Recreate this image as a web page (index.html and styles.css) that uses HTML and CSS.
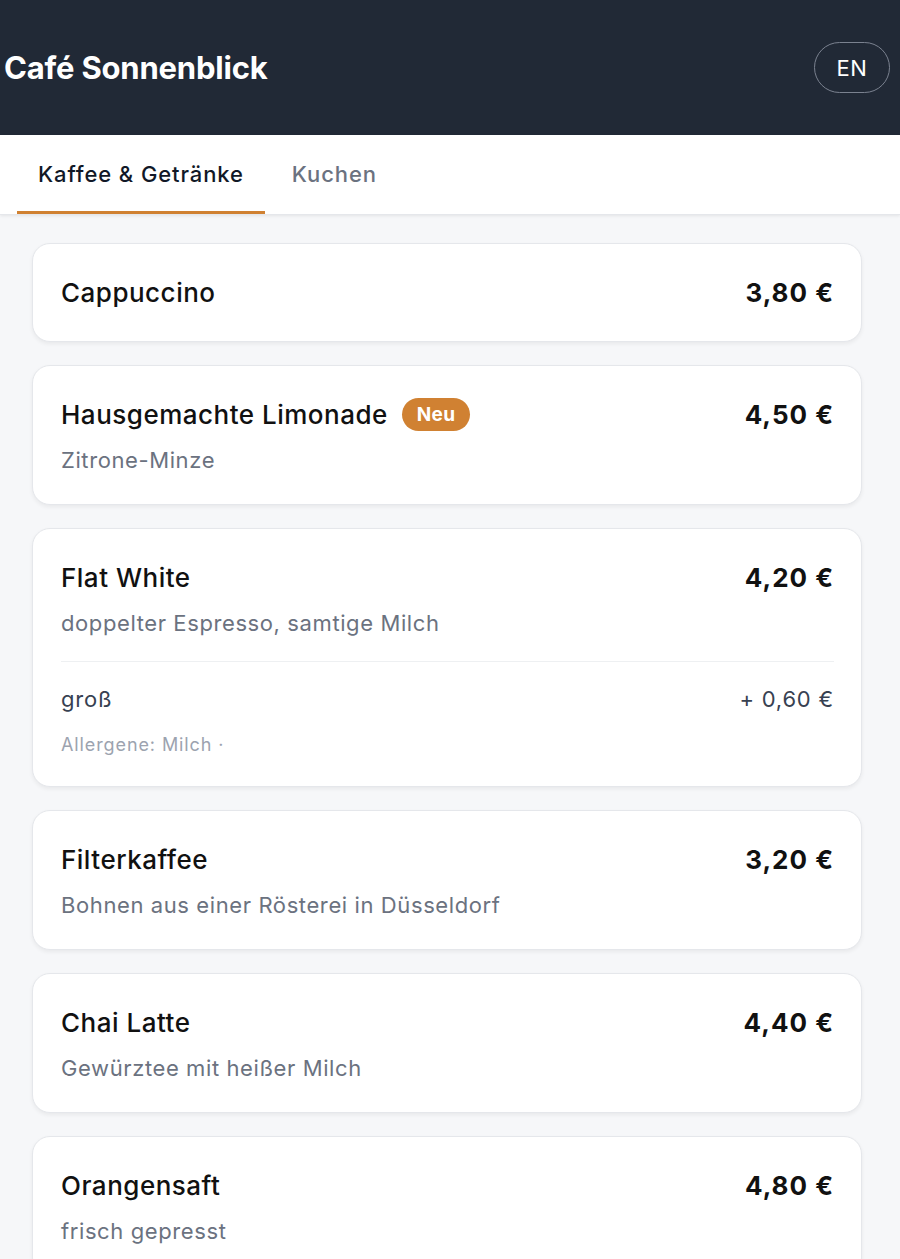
FILE: index.html
```html
<!DOCTYPE html>
<html lang="de">
<head>
  <meta charset="UTF-8" />
  <title>Café Sonnenblick</title>
  <meta name="viewport" content="width=device-width, initial-scale=1.0">
  <link rel="stylesheet" href="styles.css">
</head>
<body>

  <header class="topbar">
    <h1>Café Sonnenblick</h1>
    <button class="lang">EN</button>
  </header>

  <nav class="tabs">
    <a class="tab active" href="#">Kaffee &amp; Getränke</a>
    <a class="tab" href="#">Kuchen</a>
  </nav>

  <main class="menu">
    <div class="card">
      <div class="item-head">
        <span class="item-name">Cappuccino</span>
        <span class="item-price">3,80 €</span>
      </div>
    </div>

    <div class="card">
      <div class="item-head">
        <span class="item-name">Hausgemachte Limonade <span class="badge">Neu</span></span>
        <span class="item-price">4,50 €</span>
      </div>
      <p class="item-desc">Zitrone-Minze</p>
    </div>

    <div class="card">
      <div class="item-head">
        <span class="item-name">Flat White</span>
        <span class="item-price">4,20 €</span>
      </div>
      <p class="item-desc">doppelter Espresso, samtige Milch</p>
      <div class="options">
        <div class="option">
          <span>groß</span>
          <span>+ 0,60 €</span>
        </div>
        <p class="allergens">Allergene: Milch ·</p>
      </div>
    </div>

    <div class="card">
      <div class="item-head">
        <span class="item-name">Filterkaffee</span>
        <span class="item-price">3,20 €</span>
      </div>
      <p class="item-desc">Bohnen aus einer Rösterei in Düsseldorf</p>
    </div>

    <div class="card">
      <div class="item-head">
        <span class="item-name">Chai Latte</span>
        <span class="item-price">4,40 €</span>
      </div>
      <p class="item-desc">Gewürztee mit heißer Milch</p>
    </div>

    <div class="card">
      <div class="item-head">
        <span class="item-name">Orangensaft</span>
        <span class="item-price">4,80 €</span>
      </div>
      <p class="item-desc">frisch gepresst</p>
    </div>
  </main>

</body>
</html>
```

FILE: styles.css
```css
body {
  margin: 0;
  font-family: Inter, 'Noto Sans', sans-serif;
  background: #f6f7f9;
  color: #111827;
}

.topbar {
  display: flex;
  align-items: center;
  justify-content: space-between;
  height: 135px;
  padding: 0 10px 0 4px;
  background: #212936;
  box-sizing: border-box;
}

.topbar h1 {
  margin: 0;
  color: #ffffff;
  font-size: 31px;
  font-weight: 700;
  letter-spacing: -0.2px;
}

.lang {
  width: 76px;
  height: 51px;
  border: 1.5px solid #7b8290;
  border-radius: 26px;
  background: transparent;
  color: #ffffff;
  font-family: inherit;
  font-size: 22px;
  letter-spacing: 0.5px;
}

.tabs {
  display: flex;
  gap: 6px;
  height: 80px;
  padding-left: 17px;
  background: #ffffff;
  box-shadow: 0 1px 3px #00000014;
  border-bottom: 1px solid #e5e7eb;
  box-sizing: border-box;
}

.tab {
  display: flex;
  align-items: center;
  padding: 2px 21px 0;
  font-size: 22px;
  font-weight: 500;
  letter-spacing: 0.9px;
  color: #6b7280;
  text-decoration: none;
  border-bottom: 3px solid transparent;
}

.tab.active {
  color: #111827;
  border-bottom-color: #d08132;
}

.menu {
  display: flex;
  flex-direction: column;
  gap: 23px;
  padding: 28px 38px 28px 32px;
}

.card {
  background: #ffffff;
  border: 1px solid #e5e7eb;
  border-radius: 18px;
  padding: 30px 27px 30px 28px;
  box-shadow: 0 2px 4px #0000000f;
}

.item-head {
  display: flex;
  align-items: center;
  justify-content: space-between;
  min-height: 37px;
  line-height: 36px;
}

.item-name {
  display: flex;
  align-items: center;
  gap: 14px;
  font-size: 26px;
  font-weight: 500;
  letter-spacing: 0.5px;
  color: #111111;
}

.item-price {
  font-size: 26px;
  font-weight: 700;
  letter-spacing: 1px;
  color: #111111;
}

.badge {
  padding: 0 15px;
  line-height: 33px;
  border-radius: 17px;
  background: #d08132;
  color: #ffffff;
  font-size: 19px;
  font-weight: 700;
  letter-spacing: 0.3px;
}

.item-desc {
  margin: 13px 0 0;
  font-size: 22px;
  line-height: 28px;
  letter-spacing: 0.6px;
  color: #6b7280;
}

.options {
  margin-top: 24px;
  padding-top: 22px;
  border-top: 1px solid #eef0f2;
}

.option {
  display: flex;
  justify-content: space-between;
  font-size: 22px;
  line-height: 31px;
  letter-spacing: 0.8px;
  color: #374151;
}

.allergens {
  margin: 19px 0 0;
  font-size: 18px;
  line-height: 22px;
  letter-spacing: 0.9px;
  color: #9ca3af;
}
```
